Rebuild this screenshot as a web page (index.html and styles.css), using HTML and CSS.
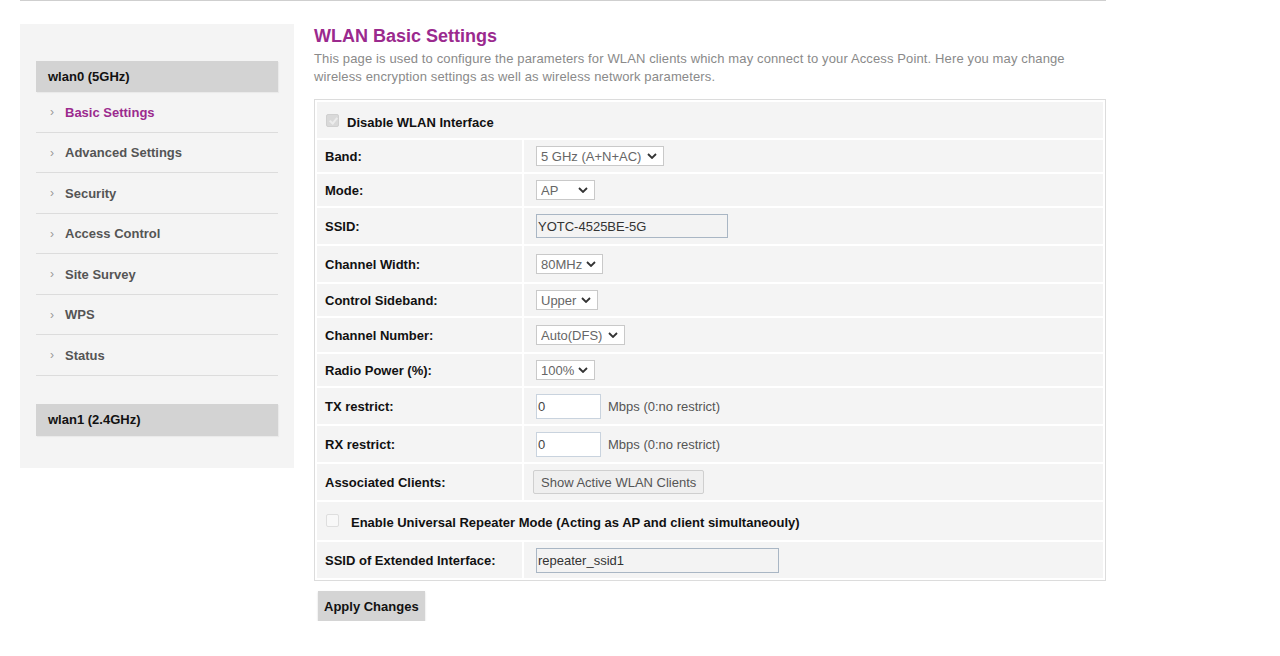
FILE: index.html
```html
<!DOCTYPE html>
<html>
<head>
<meta charset="utf-8">
<title>WLAN Basic Settings</title>
<link rel="stylesheet" href="styles.css">
</head>
<body>
<div class="page">
  <aside class="sidebar">
    <div class="group-head">wlan0 (5GHz)</div>
    <ul class="nav">
      <li class="nav-item active"><span class="arrow">&#8250;</span>Basic Settings</li>
      <li class="nav-item"><span class="arrow">&#8250;</span>Advanced Settings</li>
      <li class="nav-item"><span class="arrow">&#8250;</span>Security</li>
      <li class="nav-item"><span class="arrow">&#8250;</span>Access Control</li>
      <li class="nav-item"><span class="arrow">&#8250;</span>Site Survey</li>
      <li class="nav-item"><span class="arrow">&#8250;</span>WPS</li>
      <li class="nav-item"><span class="arrow">&#8250;</span>Status</li>
    </ul>
    <div class="group-head second">wlan1 (2.4GHz)</div>
  </aside>
  <main class="content">
    <h1 class="title">WLAN Basic Settings</h1>
    <p class="intro">This page is used to configure the parameters for WLAN clients which may connect to your Access Point. Here you may change wireless encryption settings as well as wireless network parameters.</p>
    <table class="form">
      <tr class="r-check">
        <td colspan="2" class="check-cell"><input type="checkbox" class="cb cb-disabled" checked disabled><span class="check-label">Disable WLAN Interface</span></td>
      </tr>
      <tr class="r-sel">
        <td class="lbl">Band:</td>
        <td class="val"><select class="sel w-band"><option>5 GHz (A+N+AC)</option></select></td>
      </tr>
      <tr class="r-sel">
        <td class="lbl">Mode:</td>
        <td class="val"><select class="sel w-mode"><option>AP</option></select></td>
      </tr>
      <tr class="r-inp">
        <td class="lbl">SSID:</td>
        <td class="val"><input type="text" class="txt txt-ssid" value="YOTC-4525BE-5G"></td>
      </tr>
      <tr class="r-inp">
        <td class="lbl">Channel Width:</td>
        <td class="val"><select class="sel w-cw"><option>80MHz</option></select></td>
      </tr>
      <tr class="r-sel">
        <td class="lbl">Control Sideband:</td>
        <td class="val"><select class="sel w-cs"><option>Upper</option></select></td>
      </tr>
      <tr class="r-mid">
        <td class="lbl">Channel Number:</td>
        <td class="val"><select class="sel w-cn"><option>Auto(DFS)</option></select></td>
      </tr>
      <tr class="r-sel">
        <td class="lbl">Radio Power (%):</td>
        <td class="val"><select class="sel w-rp"><option>100%</option></select></td>
      </tr>
      <tr class="r-inp">
        <td class="lbl">TX restrict:</td>
        <td class="val"><input type="text" class="txt txt-num" value="0"><span class="unit">Mbps (0:no restrict)</span></td>
      </tr>
      <tr class="r-inp">
        <td class="lbl">RX restrict:</td>
        <td class="val"><input type="text" class="txt txt-num" value="0"><span class="unit">Mbps (0:no restrict)</span></td>
      </tr>
      <tr class="r-inp">
        <td class="lbl">Associated Clients:</td>
        <td class="val"><button class="btn-light">Show Active WLAN Clients</button></td>
      </tr>
      <tr class="r-check2">
        <td colspan="2" class="check-cell"><input type="checkbox" class="cb cb-empty"><span class="check-label wide">Enable Universal Repeater Mode (Acting as AP and client simultaneouly)</span></td>
      </tr>
      <tr class="r-inp">
        <td class="lbl">SSID of Extended Interface:</td>
        <td class="val"><input type="text" class="txt txt-ext" value="repeater_ssid1"></td>
      </tr>
    </table>
    <button class="btn-apply">Apply Changes</button>
  </main>
</div>
</body>
</html>
```
FILE: styles.css
```css
* { box-sizing: border-box; }
html, body { margin: 0; padding: 0; background: #fff; }
body { font-family: "Liberation Sans", Arial, sans-serif; font-size: 13px; color: #111; }

.page {
  width: 1086px;
  margin-left: 20px;
  border-top: 1px solid #cfcfcf;
  display: flex;
  align-items: flex-start;
  gap: 20px;
  padding-top: 23px;
}

.sidebar {
  width: 274px;
  flex: none;
  background: #f4f4f4;
  padding: 37px 16px 32px;
}
.group-head {
  height: 31px;
  background: #d3d3d3;
  font-weight: bold;
  font-size: 13px;
  line-height: 31px;
  padding-left: 12px;
  color: #111;
  box-shadow: 1px 1px 1px rgba(0,0,0,0.04);
}
.group-head.second { margin-top: 28px; height: 32px; line-height: 32px; }
.nav { list-style: none; margin: 0; padding: 0; }
.nav-item {
  height: 40.5px;
  border-bottom: 1px solid #dcdcdc;
  padding-left: 14px;
  padding-top: 1px;
  font-weight: bold;
  color: #555;
  font-size: 13px;
  display: flex;
  align-items: center;
}
.nav-item.active { color: #9b2a8e; }
.arrow {
  color: #999;
  font-weight: normal;
  font-size: 12px;
  width: 15px;
  display: inline-block;
}

.content { flex: 1; min-width: 0; }
.title {
  margin: 1px 0 0;
  font-size: 18px;
  line-height: 22px;
  color: #9b2a8e;
  font-weight: bold;
}
.intro {
  margin: 3px 0 13px;
  font-size: 13px;
  letter-spacing: 0.13px;
  line-height: 18px;
  color: #8a8a8a;
}

.form {
  width: 100%;
  border: 1px solid #dcdcdc;
  border-spacing: 2px;
  background: #fff;
}
.form td { background: #f4f4f4; padding: 0; }
.lbl {
  width: 205px;
  padding-left: 8px !important;
  font-weight: bold;
  font-size: 13px;
  color: #111;
}
.val { padding-left: 12px !important; color: #666; }
.r-sel td { height: 32px; }
.r-mid td { height: 34px; }
.r-inp td { height: 36px; }
.r-check td { height: 36px; padding-top: 3px; }
.r-check2 td { height: 38px; padding-top: 2px; }

.check-cell { padding-left: 9px !important; }
.check-cell > * { vertical-align: middle; }
.check-label { font-weight: bold; font-size: 13px; color: #111; margin-left: 8px; }
.check-label.wide { margin-left: 12px; }
.cb {
  appearance: none;
  -webkit-appearance: none;
  width: 13px;
  height: 13px;
  margin: 0;
  border-radius: 2px;
  position: relative;
  top: -2px;
}
.cb-disabled {
  background: #d9d9d9;
  border: 1px solid #d0d0d0;
}
.cb-disabled::after {
  content: "";
  display: block;
  width: 3px;
  height: 6px;
  margin: 1px 0 0 3.5px;
  border: solid #ececec;
  border-width: 0 2px 2px 0;
  transform: rotate(40deg);
}
.cb-empty {
  background: #f8f8f8;
  border: 1px solid #dedede;
}

.sel {
  appearance: none;
  -webkit-appearance: none;
  height: 20px;
  border: 1px solid #c9c9c9;
  border-radius: 0;
  background-color: #fff;
  background-image: url("data:image/svg+xml;utf8,<svg xmlns='http://www.w3.org/2000/svg' width='10' height='6' viewBox='0 0 10 6'><path d='M1 1l4 4 4-4' fill='none' stroke='%23333' stroke-width='1.8'/></svg>");
  background-repeat: no-repeat;
  background-position: right 6px center;
  font-family: "Liberation Sans", Arial, sans-serif;
  font-size: 13px;
  color: #666;
  padding: 0 0 0 4px;
  vertical-align: middle;
  margin: 0;
}
.w-band { width: 128px; }
.w-mode { width: 59px; }
.w-cw { width: 67px; }
.w-cs { width: 62px; }
.w-cn { width: 89px; }
.w-rp { width: 59px; }

.txt {
  font-family: "Liberation Sans", Arial, sans-serif;
  font-size: 13px;
  color: #444;
  padding: 0 1px;
  margin: 0;
  border-radius: 0;
  outline: none;
  vertical-align: middle;
}
.txt-ssid {
  width: 192px;
  height: 24px;
  background: #f3f3f3;
  border: 1px solid #a9b6c4;
  color: #333;
}
.txt-num {
  width: 65px;
  height: 25px;
  background: #fff;
  border: 1px solid #c9d3de;
}
.txt-ext {
  width: 243px;
  height: 25px;
  background: #f3f3f3;
  border: 1px solid #a9b6c4;
  color: #333;
}
.unit { margin-left: 7px; color: #555; font-size: 13px; vertical-align: middle; }

.btn-light {
  font-family: "Liberation Sans", Arial, sans-serif;
  font-size: 13px;
  color: #555;
  background: #efefef;
  border: 1px solid #cfcfcf;
  border-radius: 2px;
  height: 24px;
  padding: 0 7px;
  margin-left: -3px;
  vertical-align: middle;
}

.btn-apply {
  display: block;
  margin: 10px 0 0 4px;
  height: 30px;
  padding: 0 6px;
  background: #d4d4d4;
  border: none;
  box-shadow: 0 1px 2px rgba(0,0,0,0.15);
  font-family: "Liberation Sans", Arial, sans-serif;
  font-weight: bold;
  font-size: 13px;
  color: #111;
}
```
